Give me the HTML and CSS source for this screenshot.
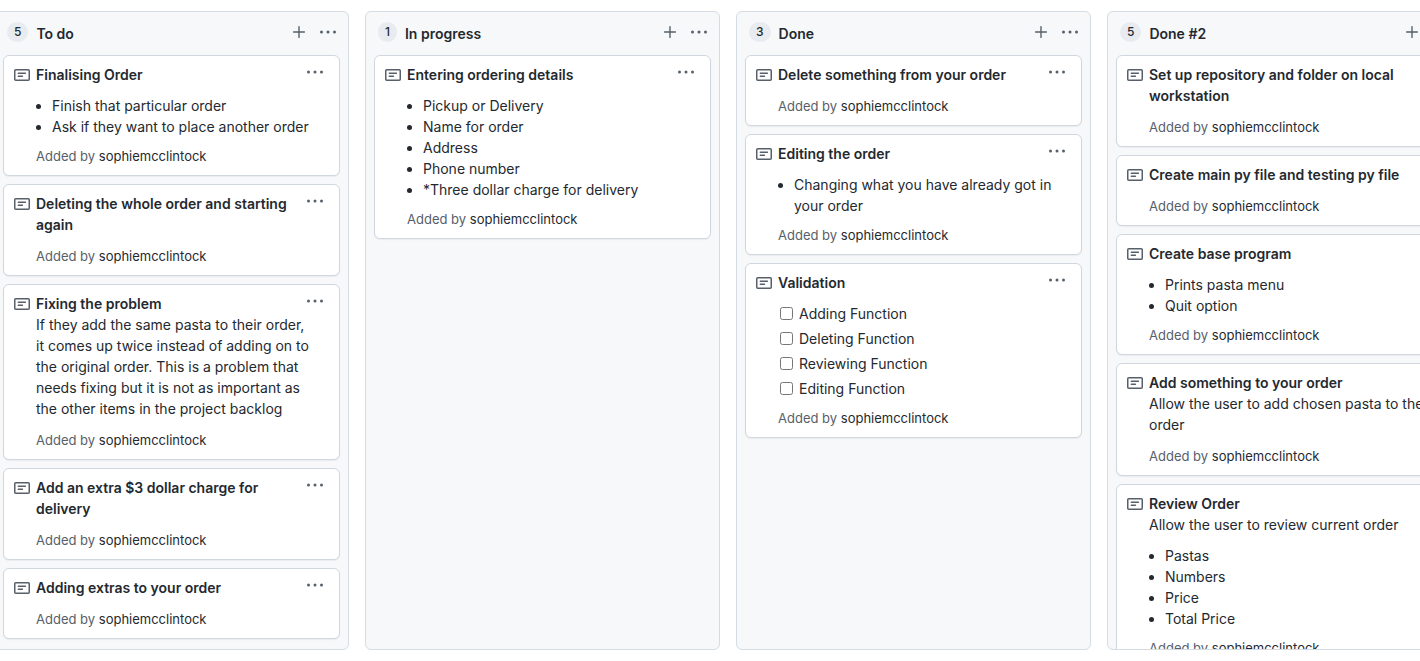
FILE: index.html
```html
<!DOCTYPE html>
<html lang="en">
<head>
<meta charset="utf-8">
<title>Project board</title>
<link rel="stylesheet" href="styles.css">
</head>
<body>
<svg class="sprite" aria-hidden="true">
  <symbol id="note" viewBox="0 0 16 16"><rect x="0.75" y="2.75" width="14.5" height="10.5" rx="1" fill="none" stroke="currentColor" stroke-width="1.5"/><path d="M4.25 6.25h7.25M4.25 9.25h4.25" fill="none" stroke="currentColor" stroke-width="1.3" stroke-linecap="round"/></symbol>
  <symbol id="plus" viewBox="0 0 16 16"><path d="M8 2.6v10.8M2.6 8h10.8" fill="none" stroke="currentColor" stroke-width="1.4" stroke-linecap="round"/></symbol>
  <symbol id="dots" viewBox="0 0 16 16"><circle cx="1.5" cy="8" r="1.5"/><circle cx="8" cy="8" r="1.5"/><circle cx="14.5" cy="8" r="1.5"/></symbol>
</svg>
<main class="board">

  <section class="column">
    <header class="column-header">
      <span class="count">5</span>
      <h2 class="column-title">To do</h2>
      <button class="icon-button" type="button" aria-label="Add a note to To do"><svg class="icon"><use href="#plus"/></svg></button>
      <button class="icon-button" type="button" aria-label="To do column menu"><svg class="icon"><use href="#dots"/></svg></button>
    </header>
    <div class="cards">
      <article class="card">
        <svg class="icon note"><use href="#note"/></svg>
        <div class="card-body">
          <h3 class="card-title">Finalising Order</h3>
          <ul class="list"><li>Finish that particular order</li><li>Ask if they want to place another order</li></ul>
          <p class="author">Added by <a href="#">sophiemcclintock</a></p>
        </div>
        <button class="icon-button card-menu" type="button" aria-label="Card menu"><svg class="icon"><use href="#dots"/></svg></button>
      </article>
      <article class="card">
        <svg class="icon note"><use href="#note"/></svg>
        <div class="card-body">
          <h3 class="card-title">Deleting the whole order and starting again</h3>
          <p class="author">Added by <a href="#">sophiemcclintock</a></p>
        </div>
        <button class="icon-button card-menu" type="button" aria-label="Card menu"><svg class="icon"><use href="#dots"/></svg></button>
      </article>
      <article class="card">
        <svg class="icon note"><use href="#note"/></svg>
        <div class="card-body">
          <h3 class="card-title">Fixing the problem</h3>
          <p class="text">If they add the same pasta to their order, it comes up twice instead of adding on to the original order. This is a problem that needs fixing but it is not as important as the other items in the project backlog</p>
          <p class="author">Added by <a href="#">sophiemcclintock</a></p>
        </div>
        <button class="icon-button card-menu" type="button" aria-label="Card menu"><svg class="icon"><use href="#dots"/></svg></button>
      </article>
      <article class="card">
        <svg class="icon note"><use href="#note"/></svg>
        <div class="card-body">
          <h3 class="card-title">Add an extra $3 dollar charge for delivery</h3>
          <p class="author">Added by <a href="#">sophiemcclintock</a></p>
        </div>
        <button class="icon-button card-menu" type="button" aria-label="Card menu"><svg class="icon"><use href="#dots"/></svg></button>
      </article>
      <article class="card">
        <svg class="icon note"><use href="#note"/></svg>
        <div class="card-body">
          <h3 class="card-title">Adding extras to your order</h3>
          <p class="author">Added by <a href="#">sophiemcclintock</a></p>
        </div>
        <button class="icon-button card-menu" type="button" aria-label="Card menu"><svg class="icon"><use href="#dots"/></svg></button>
      </article>
    </div>
  </section>

  <section class="column">
    <header class="column-header">
      <span class="count">1</span>
      <h2 class="column-title">In progress</h2>
      <button class="icon-button" type="button" aria-label="Add a note to In progress"><svg class="icon"><use href="#plus"/></svg></button>
      <button class="icon-button" type="button" aria-label="In progress column menu"><svg class="icon"><use href="#dots"/></svg></button>
    </header>
    <div class="cards">
      <article class="card">
        <svg class="icon note"><use href="#note"/></svg>
        <div class="card-body">
          <h3 class="card-title">Entering ordering details</h3>
          <ul class="list"><li>Pickup or Delivery</li><li>Name for order</li><li>Address</li><li>Phone number</li><li>*Three dollar charge for delivery</li></ul>
          <p class="author">Added by <a href="#">sophiemcclintock</a></p>
        </div>
        <button class="icon-button card-menu" type="button" aria-label="Card menu"><svg class="icon"><use href="#dots"/></svg></button>
      </article>
    </div>
  </section>

  <section class="column">
    <header class="column-header">
      <span class="count">3</span>
      <h2 class="column-title">Done</h2>
      <button class="icon-button" type="button" aria-label="Add a note to Done"><svg class="icon"><use href="#plus"/></svg></button>
      <button class="icon-button" type="button" aria-label="Done column menu"><svg class="icon"><use href="#dots"/></svg></button>
    </header>
    <div class="cards">
      <article class="card">
        <svg class="icon note"><use href="#note"/></svg>
        <div class="card-body">
          <h3 class="card-title">Delete something from your order</h3>
          <p class="author">Added by <a href="#">sophiemcclintock</a></p>
        </div>
        <button class="icon-button card-menu" type="button" aria-label="Card menu"><svg class="icon"><use href="#dots"/></svg></button>
      </article>
      <article class="card">
        <svg class="icon note"><use href="#note"/></svg>
        <div class="card-body">
          <h3 class="card-title">Editing the order</h3>
          <ul class="list"><li>Changing what you have already got in your order</li></ul>
          <p class="author">Added by <a href="#">sophiemcclintock</a></p>
        </div>
        <button class="icon-button card-menu" type="button" aria-label="Card menu"><svg class="icon"><use href="#dots"/></svg></button>
      </article>
      <article class="card">
        <svg class="icon note"><use href="#note"/></svg>
        <div class="card-body">
          <h3 class="card-title">Validation</h3>
          <ul class="tasks">
            <li><label class="task"><input class="check" type="checkbox">Adding Function</label></li>
            <li><label class="task"><input class="check" type="checkbox">Deleting Function</label></li>
            <li><label class="task"><input class="check" type="checkbox">Reviewing Function</label></li>
            <li><label class="task"><input class="check" type="checkbox">Editing Function</label></li>
          </ul>
          <p class="author">Added by <a href="#">sophiemcclintock</a></p>
        </div>
        <button class="icon-button card-menu" type="button" aria-label="Card menu"><svg class="icon"><use href="#dots"/></svg></button>
      </article>
    </div>
  </section>

  <section class="column">
    <header class="column-header">
      <span class="count">5</span>
      <h2 class="column-title">Done #2</h2>
      <button class="icon-button" type="button" aria-label="Add a note to Done #2"><svg class="icon"><use href="#plus"/></svg></button>
      <button class="icon-button" type="button" aria-label="Done #2 column menu"><svg class="icon"><use href="#dots"/></svg></button>
    </header>
    <div class="cards">
      <article class="card">
        <svg class="icon note"><use href="#note"/></svg>
        <div class="card-body">
          <h3 class="card-title">Set up repository and folder on local workstation</h3>
          <p class="author">Added by <a href="#">sophiemcclintock</a></p>
        </div>
        <button class="icon-button card-menu" type="button" aria-label="Card menu"><svg class="icon"><use href="#dots"/></svg></button>
      </article>
      <article class="card">
        <svg class="icon note"><use href="#note"/></svg>
        <div class="card-body">
          <h3 class="card-title">Create main py file and testing py file</h3>
          <p class="author">Added by <a href="#">sophiemcclintock</a></p>
        </div>
        <button class="icon-button card-menu" type="button" aria-label="Card menu"><svg class="icon"><use href="#dots"/></svg></button>
      </article>
      <article class="card">
        <svg class="icon note"><use href="#note"/></svg>
        <div class="card-body">
          <h3 class="card-title">Create base program</h3>
          <ul class="list"><li>Prints pasta menu</li><li>Quit option</li></ul>
          <p class="author">Added by <a href="#">sophiemcclintock</a></p>
        </div>
        <button class="icon-button card-menu" type="button" aria-label="Card menu"><svg class="icon"><use href="#dots"/></svg></button>
      </article>
      <article class="card">
        <svg class="icon note"><use href="#note"/></svg>
        <div class="card-body">
          <h3 class="card-title">Add something to your order</h3>
          <p class="text">Allow the user to add chosen pasta to the order</p>
          <p class="author">Added by <a href="#">sophiemcclintock</a></p>
        </div>
        <button class="icon-button card-menu" type="button" aria-label="Card menu"><svg class="icon"><use href="#dots"/></svg></button>
      </article>
      <article class="card">
        <svg class="icon note"><use href="#note"/></svg>
        <div class="card-body">
          <h3 class="card-title">Review Order</h3>
          <p class="text">Allow the user to review current order</p>
          <ul class="list"><li>Pastas</li><li>Numbers</li><li>Price</li><li>Total Price</li></ul>
          <p class="author">Added by <a href="#">sophiemcclintock</a></p>
        </div>
        <button class="icon-button card-menu" type="button" aria-label="Card menu"><svg class="icon"><use href="#dots"/></svg></button>
      </article>
    </div>
  </section>

</main>
</body>
</html>
```
FILE: styles.css
```css
* {
  box-sizing: border-box;
}

body {
  margin: 0;
  overflow: hidden;
  background: #fff;
  color: #24292f;
  font-family: Inter, "Liberation Sans", sans-serif;
  font-size: 14px;
  line-height: 21px;
}

h2,
h3,
p,
ul {
  margin: 0;
  padding: 0;
  font-size: inherit;
}

.sprite {
  display: none;
}

/* The board runs past both window edges, as when scrolled sideways. */
.board {
  display: flex;
  gap: 16px;
  height: 100vh;
  margin-left: -6px;
  padding: 11px 0;
}

.column {
  display: flex;
  flex: 0 0 355px;
  flex-direction: column;
  overflow: hidden;
  border: 1px solid #d5dce3;
  border-radius: 6px;
  background: #f6f8fa;
}

.column-header {
  display: flex;
  flex: none;
  align-items: center;
  height: 40px;
  padding: 0 12px;
}

.count {
  margin-right: 8px;
  padding: 0 7px;
  border-radius: 10px;
  background: #e8ebf0;
  font-size: 12px;
  font-weight: 500;
  line-height: 20px;
}

.column-title {
  flex: 1;
  padding-top: 2px;
  font-weight: 600;
}

.icon {
  display: block;
  width: 16px;
  height: 16px;
  fill: currentColor;
}

.icon-button {
  padding: 0;
  border: 0;
  background: none;
  color: #57606a;
  cursor: pointer;
}

.column-header .icon-button {
  margin-left: 13px;
}

.cards {
  flex: 1;
  min-height: 0;
  padding: 3px 8px 0;
  overflow: hidden;
}

.card {
  display: grid;
  grid-template-columns: 22px 1fr 26px;
  align-items: start;
  margin-bottom: 8px;
  padding: 8px 0 9px 10px;
  border: 1px solid #d0d7de;
  border-radius: 6px;
  background: #fff;
  box-shadow: 0 1px 1px rgba(140, 149, 159, 0.12);
}

.card-menu {
  justify-self: end;
  margin-right: 16px;
}

.note {
  margin-top: 3px;
  color: #57606a;
}

.card-title {
  font-weight: 600;
}

.list {
  margin: 10px 0 9px;
  padding-left: 16px;
}

.tasks {
  margin: 8px 0 7px;
  list-style: none;
}

.task {
  display: flex;
  align-items: center;
  gap: 6px;
  padding: 2px;
}

.check {
  width: 13px;
  height: 13px;
  margin: 0;
}

.author {
  margin-top: 11px;
  color: #57606a;
  font-size: 13px;
  line-height: 20px;
}

.list + .author,
.tasks + .author {
  margin-top: 0;
}

.author a {
  color: #24292f;
  text-decoration: none;
}
```
